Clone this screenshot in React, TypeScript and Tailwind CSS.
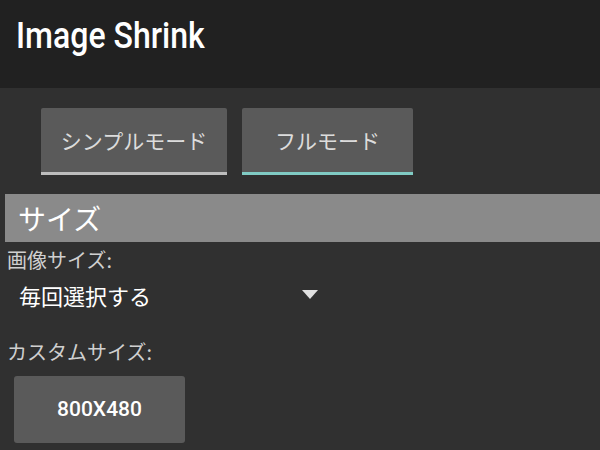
import React from "react";

export default function App() {
  const jp = { fontFamily: '"Noto Sans CJK JP", "Noto Sans", sans-serif' };
  return (
    <div className="w-[600px] h-[450px] overflow-hidden bg-[#303030] flex flex-col">
      <div className="h-[88px] bg-[#212121] flex items-center pl-[16px] shrink-0">
        <span
          className="text-[36px] font-medium text-white leading-none -mt-[16px] origin-left scale-x-[0.89] inline-block whitespace-nowrap"
          style={{ fontFamily: 'Roboto, "Liberation Sans", sans-serif' }}
        >
          Image Shrink
        </span>
      </div>
      <div className="flex gap-[15px] pl-[41px] pt-[20px]">
        <div className="w-[186px] h-[67px] bg-[#5a5a5a] rounded-t-[2px] border-b-[3px] border-[#bdbdbd] flex items-center justify-center">
          <span className="text-[21px] text-[#dcdcdc] leading-none" style={jp}>
            シンプルモード
          </span>
        </div>
        <div className="w-[171px] h-[67px] bg-[#5a5a5a] rounded-t-[2px] border-b-[3px] border-[#80cbc4] flex items-center justify-center">
          <span className="text-[21px] text-[#dcdcdc] leading-none" style={jp}>
            フルモード
          </span>
        </div>
      </div>
      <div className="ml-[5px] mt-[19px] h-[48px] bg-[#8a8a8a] flex items-center pl-[13px]">
        <span className="text-[28px] text-white leading-none" style={jp}>
          サイズ
        </span>
      </div>
      <div className="pl-[7px] mt-[7px] h-[22px] flex items-center">
        <span className="text-[20px] text-[#cfcfcf] leading-none" style={jp}>
          画像サイズ:
        </span>
      </div>
      <div className="flex items-center pl-[19px] mt-[9px] h-[30px]">
        <span className="w-[283px] text-[22px] text-white leading-none" style={jp}>
          毎回選択する
        </span>
        <svg width="16" height="9" viewBox="0 0 16 9" className="-mt-[2px]">
          <polygon points="0,0 16,0 8,9" fill="#e0e0e0" />
        </svg>
      </div>
      <div className="pl-[7px] mt-[31px] h-[22px] flex items-center">
        <span className="text-[20px] text-[#cfcfcf] leading-none" style={jp}>
          カスタムサイズ:
        </span>
      </div>
      <div className="pl-[14px] mt-[13px]">
        <div className="w-[171px] h-[67px] bg-[#5a5a5a] rounded-[3px] flex items-center justify-center">
          <span
            className="text-[21px] font-medium text-white leading-none"
            style={{ fontFamily: 'Roboto, "Liberation Sans", sans-serif' }}
          >
            800X480
          </span>
        </div>
      </div>
    </div>
  );
}
